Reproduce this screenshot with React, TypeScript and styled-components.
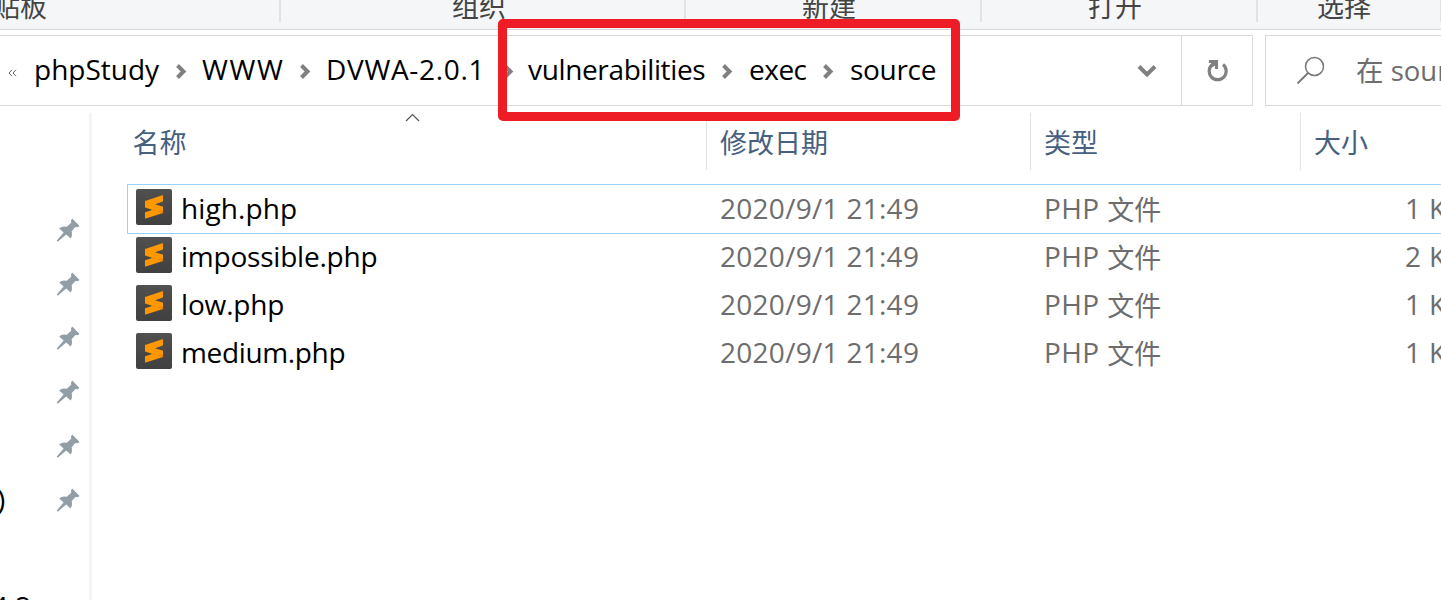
import React from "react";
import styled, { createGlobalStyle } from "styled-components";

const Global = createGlobalStyle`
  *, *::before, *::after { box-sizing: border-box; }
  body { margin: 0; background: #fff; overflow: hidden; }
`;

const Window = styled.div`
  position: relative;
  width: 1441px;
  height: 600px;
  overflow: hidden;
  display: flex;
  flex-direction: column;
  background: #fff;
  color: #000;
  font: 28px/38px "Open Sans", "Noto Sans CJK SC", sans-serif;
  white-space: nowrap;
`;

const Ribbon = styled.div`
  height: 30px;
  flex: none;
  display: flex;
  background: #f4f6f8;
  border-bottom: 1px solid #d5d8da;
`;

const RibbonGroup = styled.div<{ $width: number; $indent: number }>`
  flex: none;
  width: ${(p) => p.$width}px;
  height: 22px;
  padding-left: ${(p) => p.$indent}px;
  border-right: 2px solid #e0e2e4;
  display: flex;
  align-items: flex-end;
  color: #444;
  font-size: 27px;
  line-height: 32px;
`;

const RibbonText = styled.span<{ $shift?: number }>`
  margin-left: ${(p) => p.$shift ?? 0}px;
  margin-bottom: -1px;
`;

const AddressRow = styled.div`
  flex: none;
  height: 76px;
  padding-top: 5px;
  display: flex;
  align-items: stretch;
`;

const AddressBar = styled.div`
  flex: none;
  width: 1253px;
  display: flex;
  border: 1px solid #d9d9d9;
  border-left: 0;
`;

const Back = styled.div`
  flex: none;
  width: 34px;
  padding: 30px 0 0 8px;
  line-height: 0;
`;

const Crumb = styled.div<{ $width: number; $space?: number }>`
  flex: none;
  width: ${(p) => p.$width}px;
  padding-top: 14px;
  letter-spacing: ${(p) => p.$space ?? 0}px;
`;

const Separator = styled.div<{ $width: number }>`
  flex: none;
  width: ${(p) => p.$width}px;
  padding-top: 28px;
  line-height: 0;
`;

const AddressButton = styled.div<{ $divided?: boolean; $width: number }>`
  flex: none;
  width: ${(p) => p.$width}px;
  display: flex;
  align-items: center;
  justify-content: center;
  border-left: ${(p) => (p.$divided ? "1px solid #d9d9d9" : "0")};
`;

const Spacer = styled.div`
  flex: 1;
`;

const SearchBox = styled.div`
  flex: none;
  width: 300px;
  margin-left: 12px;
  padding-left: 30px;
  display: flex;
  border: 1px solid #d9d9d9;
  color: #6d6d6d;
`;

const SearchIcon = styled.div`
  flex: none;
  width: 60px;
  padding-top: 20px;
  line-height: 0;
`;

const SearchText = styled.div`
  padding-top: 16px;
  font-size: 27.5px;
`;

const Body = styled.div`
  flex: 1;
  min-height: 0;
  padding-top: 7px;
  display: flex;
`;

const Sidebar = styled.div`
  flex: none;
  width: 92px;
  padding-top: 90px;
  border-right: 3px solid #f5f5f5;
`;

const SideRow = styled.div`
  height: 54px;
  padding-right: 9px;
  display: flex;
  align-items: center;
  justify-content: space-between;
`;

const SideText = styled.span<{ $shift: number; $top?: number }>`
  display: block;
  margin-left: ${(p) => p.$shift}px;
  margin-top: ${(p) => p.$top ?? 0}px;
`;

const Files = styled.div`
  flex: 1;
  min-width: 0;
  padding-left: 35px;
`;

const Header = styled.div`
  height: 57px;
  display: flex;
  color: #46607f;
  font-size: 27px;
`;

const Column = styled.div<{ $width: number; $indent: number }>`
  position: relative;
  flex: none;
  width: ${(p) => p.$width}px;
  padding: 11px 0 0 ${(p) => p.$indent}px;
  border-right: 1px solid #e3e3e3;
`;

const SortMark = styled.svg`
  position: absolute;
  left: 277px;
  top: 0;
`;

const List = styled.div`
  padding-top: 14px;
`;

const Row = styled.div<{ $focused?: boolean }>`
  width: 1400px;
  height: ${(p) => (p.$focused ? 50 : 48)}px;
  margin-bottom: ${(p) => (p.$focused ? -1 : 0)}px;
  padding: ${(p) => (p.$focused ? "0 0 0 8px" : "1px 0 0 9px")};
  border: ${(p) => (p.$focused ? "1px solid #99d1ff" : "0")};
  display: flex;
  align-items: flex-start;
  color: #6d6d6d;
`;

const FileIcon = styled.div<{ $top: number }>`
  flex: none;
  width: 45px;
  padding-top: ${(p) => p.$top}px;
  line-height: 0;
`;

const Cell = styled.div<{ $width: number; $top: number; $space?: number; $strong?: boolean }>`
  flex: none;
  width: ${(p) => p.$width}px;
  padding-top: ${(p) => p.$top}px;
  letter-spacing: ${(p) => p.$space ?? 0}px;
  color: ${(p) => (p.$strong ? "#000" : "inherit")};
`;

const Cjk = styled.span`
  display: inline-block;
  font-size: 27px;
  letter-spacing: 0;
  vertical-align: -1px;
`;

const Highlight = styled.div`
  position: absolute;
  left: 498px;
  top: 19px;
  width: 462px;
  height: 102px;
  border: 9px solid #ee1c25;
  border-radius: 5px;
`;

const Chevron = () => (
  <svg width="11" height="15" viewBox="0 0 11 15">
    <path d="M1.5 1.5 7.5 7.5 1.5 13.5" fill="none" stroke="#808080" strokeWidth="4" />
  </svg>
);

const Pin = () => (
  <svg width="24" height="24" viewBox="0 0 24 24">
    <path
      d="M16.2.6 23.6 8 21.4 9.2 19.4 9 15.6 13.2Q16.8 17.4 14.6 20.6L10.2 16.6 2 23.4.6 22.8 7.6 14.4 3.2 10.4Q6 7.6 10.8 8.8L15.2 4.8 15 2.6Z"
      fill="#929ea5"
    />
  </svg>
);

const Sublime = () => (
  <svg width="36" height="36" viewBox="0 0 36 36">
    <defs>
      <linearGradient id="tile" x1="0" y1="0" x2="0" y2="1">
        <stop offset="0" stopColor="#505050" />
        <stop offset="1" stopColor="#404040" />
      </linearGradient>
    </defs>
    <rect width="36" height="36" rx="2" fill="url(#tile)" />
    <path d="M9 23.2 27 17.4V24L9 29.8Z" fill="#ff9800" />
    <path d="M16 18.6 27 21.6V24.2L15.5 21Z" fill="#ec8700" />
    <path d="M9 12 27 6V12.6L19 15.2 26.2 17.4Q27 17.7 27 18.5V21L21.5 22.4 9.8 18.8Q9 18.5 9 17.7Z" fill="#ff9800" />
  </svg>
);

const ribbon = [
  { text: "剪贴板", width: 281, indent: 0, shift: -34 },
  { text: "组织", width: 405, indent: 171 },
  { text: "新建", width: 296, indent: 116 },
  { text: "打开", width: 276, indent: 106 },
  { text: "选择", width: 184, indent: 59 },
];

const crumbs = [
  { text: "phpStudy", width: 142, gap: 26, space: 0 },
  { text: "WWW", width: 98, gap: 26, space: 1.6 },
  { text: "DVWA-2.0.1", width: 177, gap: 25, space: 0.7 },
  { text: "vulnerabilities", width: 194, gap: 27, space: -0.35 },
  { text: "exec", width: 74, gap: 27, space: -0.5 },
];

const files = [
  { name: "high.php", size: "1 KB", space: 0.1 },
  { name: "impossible.php", size: "2 KB", space: -0.22 },
  { name: "low.php", size: "1 KB", space: -0.15 },
  { name: "medium.php", size: "1 KB", space: -0.35 },
];

export default function App() {
  return (
    <Window>
      <Global />
      <Ribbon>
        {ribbon.map((g) => (
          <RibbonGroup key={g.text} $width={g.width} $indent={g.indent}>
            <RibbonText $shift={g.shift}>{g.text}</RibbonText>
          </RibbonGroup>
        ))}
      </Ribbon>
      <AddressRow>
        <AddressBar>
          <Back>
            <svg width="9" height="8" viewBox="0 0 9 8">
              <path d="M4 .8 1 4 4 7.2M8 .8 5 4 8 7.2" fill="none" stroke="#666" />
            </svg>
          </Back>
          {crumbs.map((c) => (
            <React.Fragment key={c.text}>
              <Crumb $width={c.width} $space={c.space}>{c.text}</Crumb>
              <Separator $width={c.gap}><Chevron /></Separator>
            </React.Fragment>
          ))}
          <Crumb $width={90} $space={-0.3}>source</Crumb>
          <Spacer />
          <AddressButton $width={68}>
            <svg width="20" height="14" viewBox="0 0 20 14">
              <path d="M2 2.5 10 10.5 18 2.5" fill="none" stroke="#808080" strokeWidth="4" />
            </svg>
          </AddressButton>
          <AddressButton $divided $width={71}>
            <svg width="22" height="22" viewBox="0 0 22 22">
              <path d="M6.6 4.4A8.5 8.5 0 1 0 17 4.6" fill="none" stroke="#808080" strokeWidth="3.2" />
              <path d="M3 0H12V9H9V5.4L6.8 7 4.6 5 5.6 3H3Z" fill="#808080" />
            </svg>
          </AddressButton>
        </AddressBar>
        <SearchBox>
          <SearchIcon>
            <svg width="30" height="30" viewBox="0 0 30 30">
              <circle cx="18.5" cy="10.5" r="9" fill="none" stroke="#777" strokeWidth="1.5" />
              <path d="M12 17 1.5 27.5" stroke="#777" strokeWidth="1.8" />
            </svg>
          </SearchIcon>
          <SearchText>在 source 中搜索</SearchText>
        </SearchBox>
      </AddressRow>
      <Body>
        <Sidebar>
          {[0, 1, 2, 3, 4, 5].map((i) => (
            <SideRow key={i}>
              <SideText $shift={-3} $top={-2}>{i === 5 ? ")" : ""}</SideText>
              <Pin />
            </SideRow>
          ))}
          <SideText $shift={-8} $top={60}>4.2</SideText>
        </Sidebar>
        <Files>
          <Header>
            <Column $width={580} $indent={5.5}>
              名称
              <SortMark width="16" height="10" viewBox="0 0 16 10">
                <path d="M2 8 8.5 1.5 15 8" fill="none" stroke="#555" strokeWidth="1.2" />
              </SortMark>
            </Column>
            <Column $width={324} $indent={13}>修改日期</Column>
            <Column $width={270} $indent={13}>类型</Column>
            <Column $width={270} $indent={13}>大小</Column>
          </Header>
          <List>
            {files.map((f, i) => {
              const top = i === 0 ? 4 : 3;
              return (
                <Row key={f.name} $focused={i === 0}>
                  <FileIcon $top={i === 0 ? 4 : 3}><Sublime /></FileIcon>
                  <Cell $strong $width={539} $top={top} $space={f.space}>{f.name}</Cell>
                  <Cell $width={324} $top={top} $space={0.28}>2020/9/1 21:49</Cell>
                  <Cell $width={361} $top={top} $space={0.4}>PHP <Cjk>文件</Cjk></Cell>
                  <Cell $width={90} $top={top} $space={0.3}>{f.size}</Cell>
                </Row>
              );
            })}
          </List>
        </Files>
      </Body>
      <Highlight />
    </Window>
  );
}
